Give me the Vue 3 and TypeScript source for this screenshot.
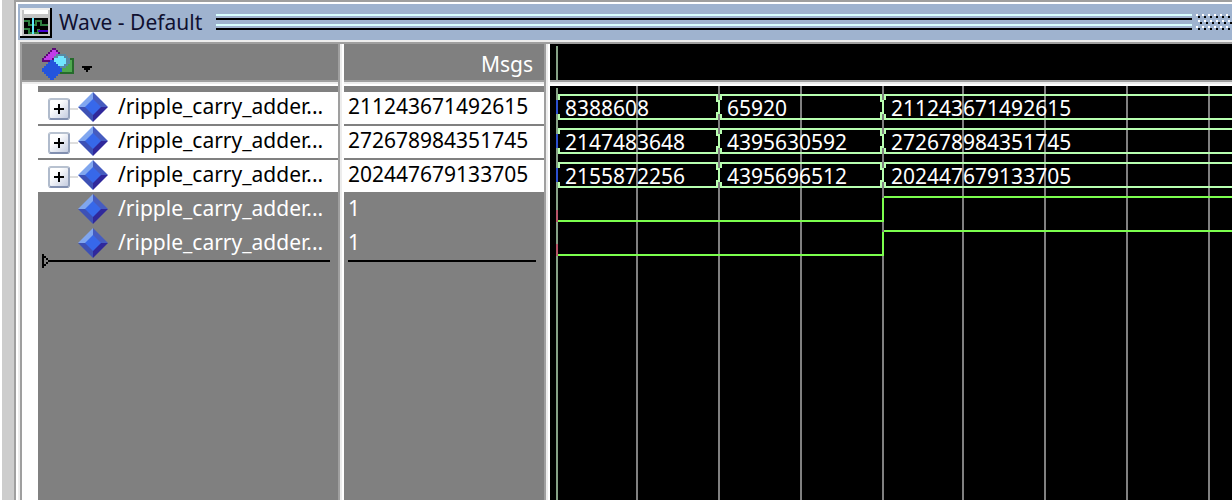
<script setup lang="ts">
interface Segment {
  start: number
  end: number | null
  value: string
}
interface Signal {
  id: number
  name: string
  value: string
  segments?: Segment[]
}

const cuts = [8, 170, 334]

function bus(id: number, values: string[]): Signal {
  return {
    id,
    name: '/ripple_carry_adder...',
    value: values[2],
    segments: values.map((value, i) => ({
      start: cuts[i],
      end: i < 2 ? cuts[i + 1] - 2 : null,
      value,
    })),
  }
}

const buses: Signal[] = [
  bus(0, ['8388608', '65920', '211243671492615']),
  bus(1, ['2147483648', '4395630592', '272678984351745']),
  bus(2, ['2155872256', '4395696512', '202447679133705']),
]
const bits: Signal[] = [
  { id: 3, name: '/ripple_carry_adder...', value: '1' },
  { id: 4, name: '/ripple_carry_adder...', value: '1' },
]
const signals: Signal[] = [...buses, ...bits]

const rowPitch = 34
const gridLines = Array.from({ length: 40 }, (_, i) => 2 * Math.round((86 + i * 81.7) / 2))
</script>

<template>
  <main class="window">
    <header class="titlebar">
      <svg class="logo" width="32" height="30" shape-rendering="crispEdges" aria-hidden="true">
        <rect width="32" height="30" fill="#000" />
        <rect width="30" height="28" fill="#eee" />
        <rect x="2" y="2" width="28" height="26" fill="#c4c4c4" />
        <rect x="4" y="2" width="24" height="4" fill="#fff" />
        <rect x="4" y="10" width="24" height="16" fill="#000" />
        <path d="M4 13H9V17H12M4 21H9V25H12M14 17H16V13H21V17H28M14 25H18V22H20" fill="none" stroke="#2f8040" stroke-width="2" />
        <rect x="18" y="22" width="10" height="2" fill="#4400d0" />
        <rect x="12" y="10" width="2" height="16" fill="#60e8ff" />
      </svg>
      <h1>Wave - Default</h1>
      <div class="rails"></div>
      <svg class="grip" width="36" height="16" shape-rendering="crispEdges" aria-hidden="true">
        <defs>
          <pattern id="grip-dots" width="6" height="12" patternUnits="userSpaceOnUse">
            <path d="M0 0h2v2h-2zM2 6h2v2h-2z" fill="#fff" />
            <path d="M2 2h2v2h-2zM4 8h2v2h-2z" fill="#000" />
          </pattern>
        </defs>
        <rect width="36" height="16" fill="url(#grip-dots)" />
      </svg>
    </header>

    <div class="panes">
      <section class="pane names">
        <div class="head">
          <button class="tools" type="button" aria-label="Signal filter">
            <svg width="50" height="32" shape-rendering="crispEdges" aria-hidden="true">
              <path d="M0 14V10H2V8H4V6H6V4H8V2H10V0H14V2H16V4H18V6H20V8H16V14Z" fill="#5c0878" />
              <path d="M2 12V10H4V8H6V6H8V4H10V2H14V4H16V6H14V8H12V10H10V12Z" fill="#c23be8" />
              <rect x="16" y="10" width="16" height="16" fill="#256b2b" />
              <rect x="18" y="12" width="12" height="12" fill="#4fa84f" />
              <path d="M14 6H24V8H26V10H28V16H26V18H24V20H14V18H12V8H14Z" fill="#5989a3" />
              <path d="M16 8H22V10H24V16H22V18H16V16H12V10H16Z" fill="#70e6ff" />
              <path d="M8 12H12V14H14V16H16V18H18V20H20V24H18V26H16V28H14V30H12V32H8V30H6V28H4V26H2V24H0V20H2V18H4V16H6V14H8Z" fill="#2454dc" />
              <path d="M40 18H50V20H48V22H46V24H44V22H42V20H40Z" fill="#000" />
            </svg>
          </button>
        </div>
        <div class="list">
          <ul>
            <li v-for="s in signals" :key="s.id" :class="{ bus: s.segments }">
              <span v-if="s.segments" class="toggle">
                <button type="button" class="plus" :aria-label="'Expand signal ' + (s.id + 1)">
                  <svg width="10" height="10" shape-rendering="crispEdges" aria-hidden="true">
                    <path d="M4 0h2v4h4v2h-4v4h-2v-4h-4v-2h4z" />
                  </svg>
                </button>
              </span>
              <span v-else class="toggle"></span>
              <svg class="gem" width="30" height="30" viewBox="0 0 30 30" aria-hidden="true">
                <path d="M15 0V9L9 15H0Z" fill="#80a6ef" />
                <path d="M15 0L30 15H21L15 9Z" fill="#465cc0" />
                <path d="M0 15H9L15 21V30Z" fill="#3d51b5" />
                <path d="M30 15L15 30V21L21 15Z" fill="#30289b" />
                <path d="M15 7L23 15L15 23L7 15Z" fill="#3768ea" />
              </svg>
              <span class="label">{{ s.name }}</span>
            </li>
          </ul>
          <div class="insertion">
            <svg width="8" height="14" shape-rendering="crispEdges" aria-hidden="true">
              <path d="M0 0h2v2h2v2h2v2h2v2h-2v2h-2v2h-2v2h-2zM2 4v6h2v-2h2v-2h-2v-2z" fill-rule="evenodd" />
            </svg>
            <span class="rule"></span>
          </div>
        </div>
      </section>

      <section class="pane values">
        <div class="head"><h2>Msgs</h2></div>
        <div class="list">
          <ul>
            <li v-for="s in signals" :key="s.id" :class="{ bus: s.segments }">
              <span class="label">{{ s.value }}</span>
            </li>
          </ul>
          <div class="insertion"><span class="rule"></span></div>
        </div>
      </section>

      <section class="pane waves">
        <div class="head"><span class="cursor"></span></div>
        <div class="canvas">
          <svg class="plot" width="100%" height="100%" shape-rendering="crispEdges" role="img" aria-label="Waveforms">
            <rect x="6" y="2" width="2" height="100%" fill="#86a286" />
            <rect v-for="x in gridLines" :key="x" :x="x" y="0" width="2" height="100%" fill="#808080" />
            <g v-for="(s, i) in buses" :key="s.id" fill="#b8ffb0">
              <rect x="6" :y="14 + i * rowPitch" width="2" height="14" fill="#2c50d0" />
              <rect v-for="c in cuts.slice(1)" :key="c" :x="c - 2" :y="14 + i * rowPitch" width="2" height="14" />
              <template v-for="seg in s.segments" :key="seg.start">
                <rect :x="seg.start" :y="8 + i * rowPitch" :width="seg.end ? seg.end - seg.start : '100%'" height="2" />
                <rect :x="seg.start" :y="32 + i * rowPitch" :width="seg.end ? seg.end - seg.start : '100%'" height="2" />
                <rect :x="seg.start" :y="10 + i * rowPitch" width="2" height="4" />
                <rect :x="seg.start" :y="28 + i * rowPitch" width="2" height="4" />
                <template v-if="seg.end">
                  <rect :x="seg.end - 2" :y="10 + i * rowPitch" width="2" height="6" />
                  <rect :x="seg.end - 2" :y="26 + i * rowPitch" width="2" height="6" />
                </template>
                <text :x="seg.start + 7" :y="30 + i * rowPitch">{{ seg.value }}</text>
              </template>
            </g>
            <g v-for="(s, i) in bits" :key="s.id" fill="#7cff4e">
              <rect x="6" :y="124 + i * rowPitch" width="2" height="12" fill="#b85468" />
              <rect x="8" :y="134 + i * rowPitch" width="324" height="2" />
              <rect x="332" :y="112 + i * rowPitch" width="2" height="24" />
              <rect x="334" :y="110 + i * rowPitch" width="100%" height="2" />
            </g>
          </svg>
        </div>
      </section>
    </div>
  </main>
</template>

<style>
body {
  margin: 0;
  background: #fff;
}
</style>

<style scoped>
.window {
  box-sizing: border-box;
  min-height: 100vh;
  margin-left: 2px;
  display: flex;
  flex-direction: column;
  border-left: 12px solid #cdcdcd;
  font-family: "Noto Sans", "Open Sans", sans-serif;
  font-size: 21px;
  line-height: 28px;
  overflow: hidden;
  box-shadow: inset 2px 2px #9f9f9f;
}
.titlebar {
  display: flex;
  align-items: flex-start;
  box-sizing: border-box;
  height: 36px;
  margin: 4px 0 0 4px;
  padding: 4px 0 0 2px;
  background: #9fb3cf;
}
.logo,
.grip {
  flex: none;
  display: block;
}
h1,
h2 {
  margin: 0;
  font-size: 21px;
  font-weight: 400;
}
h1 {
  margin-left: 7px;
  width: 148px;
  line-height: 28px;
  color: #101030;
  white-space: nowrap;
}
.rails {
  flex: 1;
  height: 16px;
  margin: 6px 4px 0 9px;
  background: linear-gradient(
    #d8ffff 0 2px, transparent 2px 4px, #000 4px 6px, transparent 6px 10px,
    #d8ffff 10px 12px, transparent 12px 14px, #000 14px 16px
  );
}
.grip {
  margin-top: 6px;
}
.panes {
  flex: 1;
  display: flex;
  margin-left: 4px;
  border-left: 2px solid #ededed;
  border-top: 2px solid #ededed;
  box-shadow: inset 2px 2px #9f9f9f;
  padding: 2px 0 0 2px;
}
.pane {
  display: flex;
  flex-direction: column;
  box-sizing: border-box;
}
.names,
.values {
  flex: none;
  border-right: 2px solid #9f9f9f;
  box-shadow: 2px 0 #ededed;
  margin-right: 4px;
}
.names {
  width: 318px;
}
.values {
  width: 202px;
}
.waves {
  flex: 1;
  min-width: 0;
}
.head {
  height: 36px;
  display: flex;
  align-items: center;
  background: #808080;
  border-bottom: 2px solid #9f9f9f;
  box-shadow: 0 2px #ededed;
  margin-bottom: 4px;
}
.values .head {
  justify-content: flex-end;
  align-items: flex-end;
  padding-right: 11px;
}
h2 {
  color: #fff;
  line-height: 32px;
}
.tools {
  display: block;
  margin-left: 20px;
  margin-top: 4px;
  padding: 0;
  border: 0;
  background: none;
}
.tools svg {
  display: block;
}
.list {
  flex: 1;
  background: #808080;
  padding-top: 6px;
}
.names .list {
  margin-left: 16px;
}
ul {
  list-style: none;
  margin: 0;
  padding: 0;
}
li {
  box-sizing: border-box;
  height: 34px;
  display: flex;
  align-items: flex-start;
  color: #fff;
  white-space: nowrap;
}
li.bus {
  color: #000;
  background: #fff;
  border-bottom: 2px solid #808080;
}
.values li {
  padding-left: 4px;
}
.toggle {
  width: 40px;
  height: 32px;
  box-sizing: border-box;
  padding: 6px 0 0 10px;
  background: linear-gradient(#dedede, #dedede) no-repeat 32px 16px / 8px 2px;
}
li:not(.bus) .toggle {
  background: none;
}
.plus {
  display: grid;
  place-items: center;
  width: 22px;
  height: 22px;
  padding: 0;
  border: 2px solid #8d9bb8;
  border-color: #b8c2d0 #95a2bc #8290b0 #b0bbcc;
  border-radius: 3px;
  background: linear-gradient(135deg, #fff 30%, #c4cce0);
}
.gem {
  flex: none;
  display: block;
  margin-right: 10px;
}
.insertion {
  display: flex;
  align-items: center;
  height: 14px;
  margin: -8px 8px 0 4px;
}
.rule {
  flex: 1;
  height: 2px;
  background: #000;
}
.waves .head {
  background: #000;
  align-items: stretch;
}
.cursor {
  width: 2px;
  margin: 2px 0 0 6px;
  background: #86a286;
}
.canvas {
  flex: 1;
  display: flex;
  min-height: 180px;
  background: #000;
  overflow: hidden;
}
.plot {
  flex: 1;
  display: block;
  height: auto;
  min-width: 0;
}
.plot text {
  fill: #fff;
  font-size: 21px;
}
</style>
